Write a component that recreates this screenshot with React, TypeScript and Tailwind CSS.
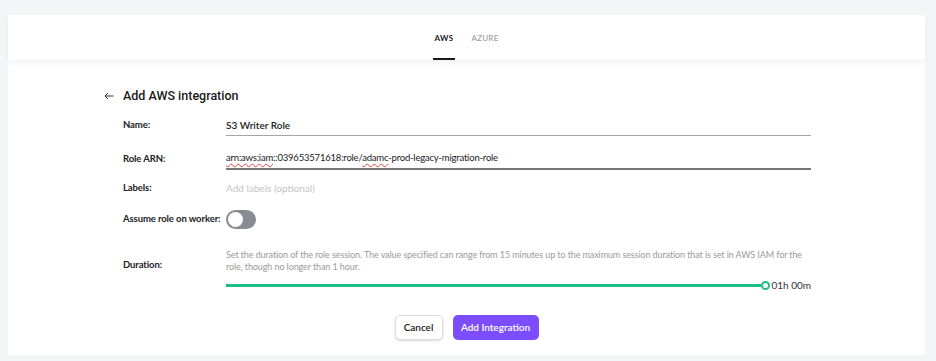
import React from "react";

const squiggle =
  "underline decoration-wavy decoration-[#e0443a] decoration-[1px] underline-offset-[2px]";

const labelCls = "w-[103px] shrink-0 whitespace-nowrap text-[9.5px] tracking-[-0.1px] font-bold text-[#222]";

export default function App() {
  return (
    <div
      className="min-h-screen bg-[#f4f5f7] pl-[8px] pr-[11px] pt-[15px] text-[#1f1f1f]"
      style={{ fontFamily: '"Lato", "Noto Sans", sans-serif' }}
    >
      <div className="bg-white">
        {/* header */}
        <header className="relative h-[45px] flex justify-center shadow-[0_3px_6px_rgba(0,0,0,0.05)]">
          <div className="flex gap-[16px] -ml-[1px]">
            <div className="flex flex-col items-center w-[22px]">
              <span className="mt-[18px] text-[8px] font-bold tracking-[0.3px] text-[#222] leading-[10px]">
                AWS
              </span>
              <span className="mt-auto h-[2px] w-[22px] bg-[#1a1a1a]" />
            </div>
            <div className="flex flex-col items-center w-[28px]">
              <span className="mt-[18px] text-[8px] font-semibold tracking-[0.2px] text-[#a0a0a8] leading-[10px]">
                AZURE
              </span>
            </div>
          </div>
        </header>

        <div className="pl-[96px] pr-[114px] pt-[28px]">
          {/* heading */}
          <div className="flex items-center h-[16px]">
            <svg width="10" height="8" viewBox="0 0 10 8" className="mr-[9px]">
              <path d="M9.5 4H1M4 1L1 4l3 3" fill="none" stroke="#333" strokeWidth="1" />
            </svg>
            <h1
              className="text-[12.5px] font-medium text-[#1a1a1a] leading-[16px]"
              style={{ fontFamily: 'Roboto, "Noto Sans", sans-serif' }}
            >
              Add AWS integration
            </h1>
          </div>

          <div className="ml-[19px] text-[10px]">
            {/* Name */}
            <div className="flex items-center mt-[11px]">
              <label className={labelCls}>Name:</label>
              <div className="flex-1 h-[21px] leading-[20px] border-b border-[#a5a5a5] font-semibold text-[#222]">
                S3 Writer Role
              </div>
            </div>
            {/* Role ARN */}
            <div className="flex items-center mt-[12px]">
              <label className={labelCls}>Role ARN:</label>
              <div className="flex-1 h-[22px] leading-[20px] border-b-2 border-[#777] text-[9.5px] tracking-[-0.2px] text-[#222]">
                <span className={squiggle}>arn:aws:iam</span>::039653571618:role/
                <span className={squiggle}>adamc</span>-prod-legacy-migration-role
              </div>
            </div>
            {/* Labels */}
            <div className="flex items-center h-[20px] mt-[8px]">
              <label className={labelCls}>Labels:</label>
              <div className="flex-1 text-[#c4c4c4]">Add labels (optional)</div>
            </div>
            {/* Toggle */}
            <div className="flex items-center h-[20px] mt-[11px]">
              <label className={labelCls}>Assume role on worker:</label>
              <button className="relative w-[30px] h-[19px] rounded-full bg-[#8b8b94]">
                <span className="absolute left-[2px] top-[2px] w-[15px] h-[15px] rounded-full bg-white" />
              </button>
            </div>
            {/* Duration */}
            <div className="flex mt-[20px]">
              <label className={labelCls + " pt-[10px] leading-[12px]"}>Duration:</label>
              <div className="flex-1">
                <p className="text-[9px] tracking-[-0.1px] leading-[12px] text-[#9a9a9a]">
                  Set the duration of the role session. The value specified can range from 15 minutes up to
                  the maximum session duration that is set in AWS IAM for the role, though no longer than 1
                  hour.
                </p>
                <div className="flex items-center h-[12px] mt-[6px]">
                  <div className="flex-1 h-[3px] bg-[#1fbd86]" />
                  <div className="w-[9px] h-[9px] rounded-full border-2 border-[#1fbd86] bg-white" />
                  <span className="ml-[1px] text-[10px] text-[#333] leading-[12px]">01h 00m</span>
                </div>
              </div>
            </div>
          </div>
        </div>

        {/* buttons */}
        <div className="flex justify-center gap-[10px] mt-[24px] pb-[15px]">
          <button className="h-[25px] w-[48px] rounded-[5px] border border-[#ddd] bg-white text-[10px] font-semibold text-[#222] shadow-[0_1px_3px_rgba(0,0,0,0.15)]">
            Cancel
          </button>
          <button className="h-[25px] w-[86px] rounded-[5px] bg-[#7c4dff] text-[10px] font-semibold text-white">
            Add Integration
          </button>
        </div>
      </div>
    </div>
  );
}
